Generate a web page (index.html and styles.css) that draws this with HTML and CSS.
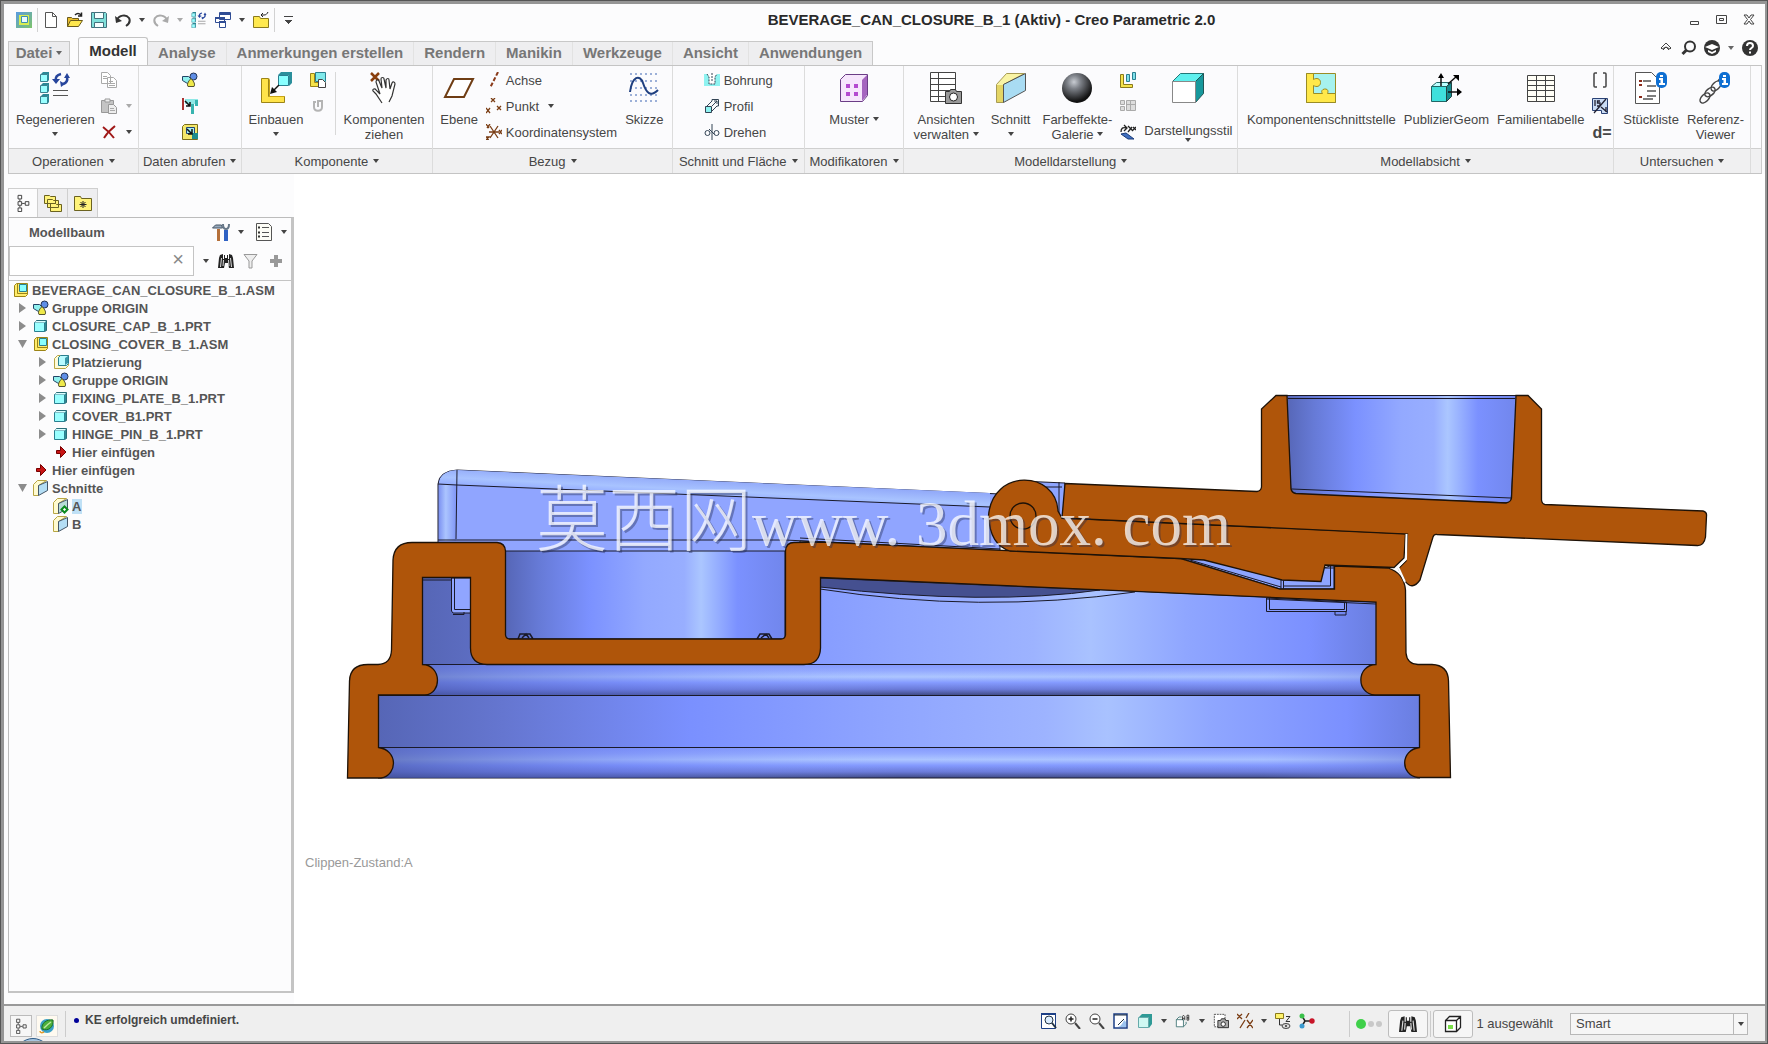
FILE: index.html
```html
<!DOCTYPE html>
<html lang="de">
<head>
<meta charset="utf-8">
<meta name="viewport" content="width=device-width, initial-scale=1">
<title>BEVERAGE_CAN_CLOSURE_B_1 (Aktiv) - Creo Parametric 2.0</title>
<link rel="stylesheet" href="styles.css">
</head>
<body>
<svg class="defs" aria-hidden="true">
  <defs>
    <linearGradient id="g-app" x2="1" y2="1"><stop offset="0" stop-color="#5b9be0"/><stop offset="1" stop-color="#7ec46a"/></linearGradient>
    <radialGradient id="g-ball" cx=".4" cy=".3" r=".65"><stop offset="0" stop-color="#c8ccd2"/><stop offset=".35" stop-color="#7c8087"/><stop offset="1" stop-color="#111"/></radialGradient>
  </defs>
  <symbol id="i-app" viewBox="0 0 16 16"><path fill="url(#g-app)" d="M0 0h16v16H0z"/><path fill="#d8ec50" d="M3 3h10v10H3z"/><path fill="#e8fbff" stroke="#3a8fb0" d="M5.500 4.500h6v6h-6z"/></symbol>
  <symbol id="i-new" viewBox="0 0 16 16"><path fill="#fff" stroke="#555" d="M2.500 .5h7l4 4v11h-11z"/><path fill="none" stroke="#555" d="M9.500 .5v4h4"/></symbol>
  <symbol id="i-open" viewBox="0 0 16 16"><path fill="#e9bd2e" stroke="#6b5a1b" d="M.5 14.500v-9h4l1 1h6v2"/><path fill="#ffe74d" stroke="#6b5a1b" d="M.5 14.500l3-6h12l-4 6z"/><path fill="none" stroke="#222" stroke-width="1.500" d="M8 3c2-2 4-2 6 0M14.500 .5v3.500h-3.500"/></symbol>
  <symbol id="i-save" viewBox="0 0 16 16"><path fill="#7fe0da" stroke="#41717c" d="M.5 .5h14l1 1v14H.5z"/><path fill="#f4ffff" stroke="#41717c" d="M3.500 .5h9v6h-9zM3.500 10.500h9v5h-9z"/></symbol>
  <symbol id="i-undo" viewBox="0 0 16 16"><path fill="none" stroke="#333" stroke-width="2" d="M2 8c2-5 9-6 12-2 2 4 0 6-3 8"/><path fill="#333" d="M0 4l1 7 6-2z"/></symbol>
  <symbol id="i-redo" viewBox="0 0 16 16"><path fill="none" stroke="#aaa" stroke-width="2" d="M14 8C12 3 5 2 2 6c-2 4 0 6 3 8"/><path fill="#aaa" d="M16 4l-1 7-6-2z"/></symbol>
  <symbol id="i-regen" viewBox="0 0 30 32"><g fill="#9ff" stroke="#3d8290"><path d="M.5 2.500h7v7h-7zM.5 13.500h7v7h-7zM.5 24.500h7v7h-7z"/></g><g fill="#2b8896"><path d="M1 2l2-2h6v8l-1.500 2V2zM1 13l2-2h6v8l-1.500 2v-8zM1 24l2-2h6v8l-1.500 2v-8z"/></g><path fill="none" stroke="#27459c" stroke-width="2.500" d="M16 9c-1-4 1-6 5-7M27 5c1 4-1 6-4 7"/><path fill="#27459c" d="M12 7l4 5 4-5zM24 6l3-5 3 5zM20 9l1 6 4-3z"/><path stroke="#555" d="M13 18.500h15M13 23.500h15"/></symbol>
  <symbol id="i-windows" viewBox="0 0 16 16"><g fill="#fff" stroke="#2f4c94"><path d="M4.500 .5h11v7h-11zM.5 5.500h9v5h-9zM4.500 9.500h6v6h-6z"/></g><path stroke="#2f4c94" stroke-width="2" d="M4 2h12M0 6h10M4 10h7"/></symbol>
  <symbol id="i-folder" viewBox="0 0 16 16"><path fill="#ffe94f" stroke="#8a7a1c" d="M.5 15.500v-11h6l1 2h8v9z"/><path fill="none" stroke="#222" d="M8 3h3c2 0 3-1 4-3M10 1L8 3l2 2"/></symbol>
  <symbol id="i-min" viewBox="0 0 12 12"><path fill="none" stroke="#444" d="M1.500 7.500h8v3h-8z"/></symbol>
  <symbol id="i-max" viewBox="0 0 12 12"><path fill="none" stroke="#444" d="M.5 1.500h10v8H.5zM3.500 4.500h4v2h-4z"/></symbol>
  <symbol id="i-close" viewBox="0 0 12 12"><path fill="none" stroke="#444" d="M1 1h3l2 3 2-3h3L7.500 5.500 11 10H8L6 7l-2 3H1l3.500-4.500z"/></symbol>
  <symbol id="i-up" viewBox="0 0 16 16"><path fill="none" stroke="#444" d="M3 8l5-5 5 5-1 1-4-2-4 2zM5 10l3-3 3 3"/></symbol>
  <symbol id="i-search" viewBox="0 0 16 16"><circle cx="9" cy="6.500" r="5" fill="none" stroke="#333" stroke-width="2"/><path stroke="#333" stroke-width="3" d="M5.500 10L1.500 14"/></symbol>
  <symbol id="i-learn" viewBox="0 0 16 16"><circle cx="8" cy="8" r="8" fill="#333"/><path fill="#fff" d="M1 7l7-3 7 3-7 3zM4 10l4 2 4-2v2l-4 2-4-2z"/></symbol>
  <symbol id="i-help" viewBox="0 0 16 16"><circle cx="8" cy="8" r="8" fill="#333"/><path fill="none" stroke="#fff" stroke-width="2" d="M5 6c0-4 6-4 6 0 0 2-3 2-3 4"/><path fill="#fff" d="M7 11.500h2v2H7z"/></symbol>
  <symbol id="i-copy" viewBox="0 0 16 16"><g fill="#fff" stroke="#aaa"><path d="M.5 .5h6l3 3v8h-9zM6.500 5.500h6l3 3v7h-9z"/><path d="M2 4.500h4M2 6.500h4M8 9.500h4M8 11.500h6M8 13.500h6"/></g></symbol>
  <symbol id="i-paste" viewBox="0 0 16 16"><path fill="#c4c4c4" stroke="#999" d="M.5 2.500h12v12H.5z"/><path fill="#eee" stroke="#999" d="M4 1h5v3H4zM7.500 6.500h5l3 3v6h-8z"/><path stroke="#aaa" d="M9 10.500h4M9 12.500h5"/></symbol>
  <symbol id="i-del" viewBox="0 0 16 16"><path fill="none" stroke="#a01818" stroke-width="2" d="M2 3c4 3 8 7 11 11M14 2C9 6 6 9 3 14"/></symbol>
  <symbol id="i-group" viewBox="0 0 16 16"><path fill="#8ff0ee" stroke="#246" d="M.5 4.500h6l3 3-4 4-5-3z"/><circle cx="11.500" cy="4.500" r="3.500" fill="#5f8ee6" stroke="#235"/><path fill="#efe94a" stroke="#553" d="M9 6.500q5 5 3 8h-6q-2-3 3-8z"/></symbol>
  <symbol id="i-imp1" viewBox="0 0 16 16"><path fill="#8fe8e6" d="M3 1h13v5H3z"/><path fill="#38b4b0" d="M9 6h3v10H9zM13 2h3v6h-3z"/><path fill="#a33" d="M0 0h2v12H0z"/><path fill="none" stroke="#111" stroke-width="1.500" d="M3 3l5 5M8 4v4H4"/></symbol>
  <symbol id="i-imp2" viewBox="0 0 16 16"><path fill="#f5e86a" stroke="#7a6d18" d="M.5 15.500v-13l2-2h13v15z"/><path fill="#a6f0f0" stroke="#247" d="M4.500 3.500h8v6h-8z"/><path fill="#1e8c8c" d="M10 9h6v6h-6z"/><path fill="none" stroke="#111" stroke-width="1.500" d="M5 5l5 5M10 5v5H6"/></symbol>
  <symbol id="i-assemble" viewBox="0 0 32 32"><path fill="#ffe34a" stroke="#9c8417" d="M1.500 6.500h7v18h16v6h-23z"/><path fill="#c9a415" d="M9 24V8l1-2v18h15l-1 1H9z"/><path fill="#8ff" stroke="#2a7f90" d="M18.500 3.500h10v10h-10z"/><path fill="#2a8f9c" d="M18 3l3-3h11v11l-3 3V3z"/><path stroke="#111" stroke-width="1.500" d="M19 13l-7 7"/><path fill="#111" d="M10 22l2-7 5 5z"/></symbol>
  <symbol id="i-create" viewBox="0 0 16 16"><path fill="#f5e34a" stroke="#9c8417" d="M.5 1.500h4v9h5v4h-9z"/><path fill="#7fe9ea" stroke="#2a7f90" d="M5.500 .5h10v9h-10z"/><path fill="#fff" stroke="#444" d="M8.500 7.500h4l3 3v5h-7z"/></symbol>
  <symbol id="i-clip" viewBox="0 0 16 16"><path fill="none" stroke="#b4b4b4" stroke-width="2" d="M4 4v5c0 5 8 5 8 0V3H8v6M3 4h3"/></symbol>
  <symbol id="i-drag" viewBox="0 0 32 32"><path fill="none" stroke="#8a3f0e" stroke-width="2.500" d="M3 1l8 8M11 1L3 9"/><path fill="#fff" stroke="#333" stroke-width="1.200" d="M14 31L8 22l-3-3c-1-2 2-3 3-1l4 4-4-12c0-2 2-3 3-1l3 7-1-9c0-2 3-2 3 0l2 9v-8c1-2 3-2 3 0l1 9 2-6c1-2 3-1 3 1l-3 12-3 6"/></symbol>
  <symbol id="i-plane" viewBox="0 0 32 32"><path fill="#fff" stroke="#6f3d14" stroke-width="2" d="M11 7h19l-9 18H2z"/></symbol>
  <symbol id="i-axis" viewBox="0 0 16 16"><path stroke="#8a3a1a" stroke-width="2" stroke-dasharray="4 2" d="M12 0L4 16"/></symbol>
  <symbol id="i-point" viewBox="0 0 16 16"><path stroke="#7a3d14" stroke-width="1.300" d="M5 0l4 4M9 0L5 4M0 10l4 5M4 10l-4 5M11 8l4 4M15 8l-4 4"/></symbol>
  <symbol id="i-csys" viewBox="0 0 16 16"><path stroke="#7a3d14" stroke-width="1.300" d="M3 8h10M4 2l8 12M12 2L4 14M0 0l3 4M4 0L1 4M13 6l3 4M16 6l-3 4M0 13h3l-3 3h3"/></symbol>
  <symbol id="i-sketch" viewBox="0 0 32 32"><path stroke="#9cb0d8" stroke-width="2" stroke-dasharray="2 3" d="M2 2h28M2 9h28M2 16h28M2 23h28M2 29h28"/><path fill="none" stroke="#1f3f7f" stroke-width="2" d="M2 20C4 4 12 2 15 11s7 15 15 7"/></symbol>
  <symbol id="i-hole" viewBox="0 0 16 16"><path fill="#8ff3f1" d="M0 2h16v12H0z"/><path fill="#fff" d="M3 2h10l-2 3v7H5V5z"/><path fill="none" stroke="#345" stroke-dasharray="2 1" d="M3 2l2 3v7h6V5l2-3M8 1v8"/></symbol>
  <symbol id="i-extrude" viewBox="0 0 16 16"><path fill="#8ff3f1" stroke="#345" d="M1.500 8.500h6v6h-6z"/><path fill="none" stroke="#345" d="M3 8l5-5V1.500h6.500V8H13l-5 5M8 8l5-5M10 3h3v3"/></symbol>
  <symbol id="i-revolve" viewBox="0 0 16 16"><path fill="none" stroke="#345" d="M8 0v16M1 9a2.500 2.500 0 105 0 2.500 2.500 0 10-5 0M10 9a2.500 2.500 0 105 0 2.500 2.500 0 10-5 0M5 5l5 5"/></symbol>
  <symbol id="i-pattern" viewBox="0 0 32 32"><path fill="#f6e6fc" stroke="#6b3d86" d="M2.500 7.500l5-5h22v21l-5 6h-22z"/><path fill="#a565bf" d="M24 8l5-5v20l-5 6z"/><path fill="#b44ad0" d="M8 12h4v4H8zM16 12h4v4h-4zM8 20h4v4H8zM16 20h4v4h-4z"/></symbol>
  <symbol id="i-views" viewBox="0 0 32 32"><path fill="#fff" stroke="#444" d="M.5 .5h25v29H.5zM.5 6.500h25M.5 12.500h25M.5 18.500h25M.5 24.500h25M8.500 .5v29"/><path fill="#999" stroke="#333" d="M15.500 19.500h4l1-2h5l1 2h5v12h-16z"/><circle cx="23.500" cy="25" r="4" fill="#fff" stroke="#222"/></symbol>
  <symbol id="i-section" viewBox="0 0 32 32"><path fill="#f9f4a5" stroke="#a79b54" d="M1.500 12.500l10-11h18L8.500 12.500v18l-7 0z"/><path fill="#e4d565" d="M2 13h6v17H2z"/><path fill="#a9dcf3" stroke="#555" d="M8.500 12.500l22-11v17l-22 12z"/></symbol>
  <symbol id="i-ball" viewBox="0 0 32 32"><circle cx="16" cy="16" r="15" fill="url(#g-ball)"/></symbol>
  <symbol id="i-expl" viewBox="0 0 16 16"><path fill="#f5e34a" stroke="#8a7a1c" d="M.5 2.500h3v10h9v3H.5z"/><path fill="#7fe0ea" stroke="#2a7f90" d="M6.500 2.500h3v7h-3zM12.500 .5h3v7h-3z"/></symbol>
  <symbol id="i-table" viewBox="0 0 16 16"><path fill="#ddd" stroke="#aaa" d="M.5 2.500h4v4h-4zM.5 8.500h4v4h-4zM6.500 2.500h9v10h-9zM6.500 6.500h9M10.500 2.500v10"/></symbol>
  <symbol id="i-persp" viewBox="0 0 16 16"><path fill="#3f6fc0" stroke="#1b3b78" d="M1 10l5-1 8 6H8z"/><path fill="none" stroke="#222" stroke-width="1.300" d="M1 8c0-4 2-5 5-4M4 1l3 3-3 3M8 8l4-5M8 2l5 5M13 3l3 3M16 3l-3 3"/></symbol>
  <symbol id="i-cube" viewBox="0 0 32 32"><path fill="#5ff0ee" stroke="#277" d="M.5 9.500l8-8h23l-8 8z"/><path fill="#17989c" stroke="#255" d="M23.500 9.500l8-8v20l-8 9z"/><path fill="#fff" stroke="#888" d="M.5 9.500h23v21H.5z"/></symbol>
  <symbol id="i-puzzle" viewBox="0 0 32 32"><path fill="#a6f2ee" stroke="#9a8c25" d="M1.500 1.500h29v29h-29z"/><path fill="#ffe84a" stroke="#9a8c25" d="M1.500 1.500h7v6c3-2 7-1 7 3s-4 5-7 3v8h9c-4-5 8-7 5 0h8v9h-29z"/></symbol>
  <symbol id="i-publish" viewBox="0 0 32 32"><path fill="#3fe0dc" stroke="#266" d="M1.500 14.500h15v15h-15z"/><path fill="#bff" stroke="#266" d="M1.500 14.500l5-4h15l-5 4z"/><path fill="#178a8c" stroke="#244" d="M16.500 14.500l5-4v14l-5 5z"/><path fill="none" stroke="#111" stroke-width="1.500" d="M11 14V3M18 12l9-8M18 20h13"/><path d="M8 6l3-5 3 5zM23 3h6v6zM27 16l5 4-5 4z"/></symbol>
  <symbol id="i-family" viewBox="0 0 32 32"><path fill="#fffef6" stroke="#444" d="M2.500 3.500h27v26h-27zM2.500 8.500h27M2.500 13.500h27M2.500 18.500h27M2.500 24.500h27M11.500 3.500v26M20.500 3.500v26"/></symbol>
  <symbol id="i-brackets" viewBox="0 0 16 16"><path fill="none" stroke="#444" stroke-width="1.500" d="M5 1H3q-1 0-1 1v12q0 1 1 1h2M11 1h2q1 0 1 1v12q0 1-1 1h-2"/></symbol>
  <symbol id="i-param" viewBox="0 0 16 16"><path fill="#c9dbf4" stroke="#2a4276" d="M.5 .5h15v15H9.500v-3h-9z"/><path stroke="#223" stroke-width="1.300" fill="none" d="M14 1L2 15M3 2v6M8 3H5.500v2H8v3H5M9 9l6 5M14 9v5"/></symbol>
  <symbol id="i-bom" viewBox="0 0 32 32"><path fill="#fff" stroke="#555" d="M.5 .5h16l8 8v23H.5z"/><path stroke="#555" stroke-width="1.500" d="M8 9h8M12 14h9M12 19h9M12 24h9M8 27h10"/><path fill="#8a2a1a" d="M4 8h3v2H4zM4 12h3v2H4zM4 24h3v2H4z"/><rect x="21" width="11" height="16" rx="5" fill="#0f6fd2"/><path fill="#fff" d="M25 3h3v2h-3zM24 6h4v5h2v2h-6v-2h1.500V8H24z"/></symbol>
  <symbol id="i-ref" viewBox="0 0 32 32"><g fill="none" stroke="#444" stroke-width="1.500"><ellipse cx="6" cy="26" rx="6" ry="3.500" transform="rotate(-45 6 26)"/><ellipse cx="11" cy="20" rx="6" ry="3.500" transform="rotate(-40 11 20)"/><ellipse cx="17" cy="14" rx="6" ry="3.500" transform="rotate(-45 17 14)"/><path d="M19 9l4-5"/></g><rect x="20" width="11" height="16" rx="5" fill="#0f6fd2"/><path fill="#fff" d="M24 3h3v2h-3zM23 6h4v5h2v2h-6v-2h1.500V8H23z"/></symbol>
  <symbol id="i-tree" viewBox="0 0 16 20"><path fill="none" stroke="#333" d="M2.500 1.500h4v4h-4zM2.500 8.500h4v4h-4zM2.500 15.500h4v4h-4zM10.500 8.500h4v4h-4zM4.500 6v2M4.500 13v2M7 10.500h3"/></symbol>
  <symbol id="i-folders" viewBox="0 0 18 18"><g fill="#fff37a" stroke="#6b6220"><path d="M.5 9.500v-8h5l1 1h5v7zM3.500 13.500v-8h5l1 1h5v7zM6.500 17.500v-8h5l1 1h5v7z"/></g></symbol>
  <symbol id="i-fav" viewBox="0 0 18 18"><path fill="#fff37a" stroke="#6b6220" d="M.5 16.500v-14h6l1 2h10v12z"/><path stroke="#222" d="M9 7v7M6.500 8l5 5M11.500 8l-5 5M5.500 10.500h7"/></symbol>
  <symbol id="i-tools" viewBox="0 0 18 18"><path fill="#9ab" stroke="#456" d="M.5 5l3-3h6l1 3H5z"/><path fill="#b5703a" d="M5 6h3v12H5z"/><path fill="#2f62c4" d="M12 7h4v11h-4z"/><path fill="none" stroke="#678" stroke-width="2" d="M11 1c0 4 1 5 3 5s3-2 3-5"/></symbol>
  <symbol id="i-list" viewBox="0 0 16 18"><path fill="#fdfdf6" stroke="#555" d="M.5 .5h12l3 3v14H.5z"/><path stroke="#555" d="M6 4.500h7M6 9.500h7M6 13.500h7"/><path stroke="#333" stroke-width="2" d="M2 4.500h2M2 9.500h2M2 13.500h2"/></symbol>
  <symbol id="i-bino" viewBox="0 0 16 16"><path fill="#222" d="M1 5l1-3 3-1v5h1V2h1v3h2V2h1v4h1V1l3 1 1 3 1 10h-5l-1-5H7l-1 5H0z"/><path stroke="#ddd" d="M3.500 5L2.500 14M12.500 5l1 9M5.500 7l-.5 6M10.500 7l.5 6"/></symbol>
  <symbol id="i-funnel" viewBox="0 0 16 16"><path fill="#eee" stroke="#999" d="M1 1.500h13L9 8v7H6V8z"/></symbol>
  <symbol id="i-plus" viewBox="0 0 16 16"><path fill="#999" d="M6 2h4v4h4v4h-4v4H6v-4H2V6h4z"/></symbol>
  <symbol id="i-asm" viewBox="0 0 16 16"><path fill="#ffec6a" stroke="#9c8417" d="M1.500 3.500l2-2h11v11l-2 2h-11z"/><path fill="#8ff" stroke="#2a7f90" d="M6.500 2.500h7v7h-7z"/><path fill="none" stroke="#9c8417" d="M4.500 2v9.500H14"/></symbol>
  <symbol id="i-prt" viewBox="0 0 16 16"><path fill="#2f8c96" stroke="#2a6d78" d="M1.500 4.500l2-2h10v10l-2 1z"/><path fill="#9ff" stroke="#2a7f90" d="M1.500 4.500h10v9h-10z"/><path fill="#dff" d="M3 3h10l-1.500 1.500h-10z"/></symbol>
  <symbol id="i-place" viewBox="0 0 16 16"><path fill="#fffbd8" stroke="#b8a644" d="M1.500 4.500l3-3h11v10l-3 3h-11z"/><path fill="#b8fbff" stroke="#2a7f90" d="M5.500 3.500l2-2h8v8l-2 2h-8z"/><path fill="#3a98a8" d="M12 4l3-2v7l-3 2z"/></symbol>
  <symbol id="i-insert" viewBox="0 0 16 16"><path fill="#c81414" stroke="#700" d="M3.500 6.500h4v-4l5.500 5.500-5.500 5.500v-4h-4z"/></symbol>
  <symbol id="i-sec" viewBox="0 0 16 16"><path fill="#fffbd0" stroke="#b8a644" d="M.5 4.500l4-4h9l-8 5v10h-5z"/><path fill="#b4def5" stroke="#456" d="M5.500 5.500l9-4v9l-9 5z"/></symbol>
  <symbol id="i-secact" viewBox="0 0 16 16"><path fill="#fffbd0" stroke="#b8a644" d="M.5 4.500l4-4h9l-8 5v10h-5z"/><path fill="#b8dcd8" stroke="#456" d="M5.500 5.500l9-4v9l-9 5z"/><path fill="#fff" stroke="#0b8a1e" stroke-width="2" d="M11.500 8.500l3 3-3 3-3-3z"/></symbol>
  <symbol id="i-globe" viewBox="0 0 16 16"><circle cx="8" cy="8" r="7" fill="#3aa0c8"/><path fill="#4caf3a" stroke="#1c6e2c" d="M3 11C2 5 8 1 14 2c1 6-4 12-11 9z"/><path fill="none" stroke="#bfe8a0" stroke-width="1.500" d="M5 10C7 8 9 6 12 4"/><path fill="none" stroke="#e09a2a" stroke-width="1.500" d="M1 13c0 2 2 2 4 1"/></symbol>
  <symbol id="i-refit" viewBox="0 0 16 16"><path fill="#fff" stroke="#1c3f86" d="M.5 .5h14v15H.5z"/><path stroke="#1c3f86" stroke-width="2" d="M0 1h15"/><circle cx="8" cy="7" r="4" fill="#def" stroke="#234"/><path stroke="#234" stroke-width="2" d="M11 10l4 5"/></symbol>
  <symbol id="i-zin" viewBox="0 0 16 16"><circle cx="6" cy="6" r="5" fill="#fff" stroke="#444"/><path stroke="#444" stroke-width="2" d="M10 10l5 6"/><path stroke="#222" stroke-width="1.500" d="M3.500 6h5M6 3.500v5"/></symbol>
  <symbol id="i-zout" viewBox="0 0 16 16"><circle cx="6" cy="6" r="5" fill="#fff" stroke="#444"/><path stroke="#444" stroke-width="2" d="M10 10l5 6"/><path stroke="#222" stroke-width="1.500" d="M3.500 6h5"/></symbol>
  <symbol id="i-repaint" viewBox="0 0 16 16"><path fill="#fff" stroke="#1c3f86" stroke-width="1.500" d="M1 1h13v14H1z"/><path fill="#9cc4f0" d="M5 14c3-1 5-4 6-7l2 2v5z"/><path stroke="#234" d="M5 12l6-6M1 2h13"/></symbol>
  <symbol id="i-shade" viewBox="0 0 16 16"><path fill="#2f9a96" d="M2 4l3-3h10v10l-3 4z"/><path fill="#cff8f2" stroke="#6aa" d="M1.500 4.500h10v10h-10z"/></symbol>
  <symbol id="i-named" viewBox="0 0 18 16"><path fill="#fff" stroke="#477" d="M1.500 6.500h8v8h-8zM1.500 6.500l3-3h3M9.500 14.500l3-3V9"/><path fill="none" stroke="#333" d="M8.500 7V3l1-1.500 1.500 1.500v4M8.500 5h2.500M13.500 1.500V7h2V4.500h-2 2v-3z"/></symbol>
  <symbol id="i-viewmgr" viewBox="0 0 18 16"><path fill="#fff" stroke="#444" stroke-dasharray="2 1" d="M1.500 .5h12v14h-12z"/><path fill="#aaa" stroke="#222" d="M5.500 7.500h3l1-2h4l1 2h3v8h-12z"/><circle cx="11.500" cy="11.500" r="2.500" fill="#fff" stroke="#222"/></symbol>
  <symbol id="i-datum" viewBox="0 0 16 16"><path stroke="#7a3d14" stroke-width="1.300" d="M0 1l5 5M5 1L0 6M8 7L3 15M12 0L9 5M10 7l6 8M16 7l-6 8"/></symbol>
  <symbol id="i-annot" viewBox="0 0 16 16"><path fill="#fff36a" stroke="#8a7a1c" d="M.5 .5h8v5h-8z"/><path fill="none" stroke="#333" d="M11 3.500h4l-4 5h4M4.500 6v6H7"/><ellipse cx="11" cy="13" rx="4" ry="2.500" fill="#ddd" stroke="#444"/><circle cx="11" cy="13" r="1" fill="#333"/></symbol>
  <symbol id="i-spin" viewBox="0 0 16 16"><path stroke="#222" stroke-width="1.500" fill="none" d="M3 3l3 5h7M6 8l-3 5"/><circle cx="3" cy="3" r="2.500" fill="#3ac04a"/><circle cx="3" cy="13" r="2.500" fill="#3a9ad0"/><circle cx="13" cy="8" r="2.700" fill="#c81428"/></symbol>
  <symbol id="i-box" viewBox="0 0 18 18"><path fill="#fff" stroke="#222" stroke-width="1.300" d="M1.500 5.500l4-4h11v11l-4 4h-11zM1.500 5.500h11v11M12.500 5.500l4-4"/><path fill="#7be04a" d="M4 10h5v4H4z"/></symbol>
</svg>

<div class="window">
  <header class="titlebar">
    <div class="quick">
      <button aria-label="Creo"><svg><use href="#i-app"/></svg></button><i class="vr"></i>
      <button aria-label="Neu"><svg><use href="#i-new"/></svg></button>
      <button aria-label="Öffnen"><svg><use href="#i-open"/></svg></button>
      <button aria-label="Speichern"><svg><use href="#i-save"/></svg></button>
      <button aria-label="Rückgängig"><svg><use href="#i-undo"/></svg></button><button class="drop" aria-label="Rückgängig-Liste"><i class="caret"></i></button>
      <button aria-label="Wiederherstellen"><svg><use href="#i-redo"/></svg></button><button class="drop" aria-label="Wiederherstellen-Liste"><i class="caret pale"></i></button>
      <button aria-label="Regenerieren"><svg><use href="#i-regen"/></svg></button>
      <button aria-label="Fenster"><svg><use href="#i-windows"/></svg></button><button class="drop" aria-label="Fensterliste"><i class="caret"></i></button>
      <button aria-label="Schließen"><svg><use href="#i-folder"/></svg></button><i class="vr"></i>
      <button aria-label="Symbolleiste anpassen"><i class="caret wide"></i></button>
    </div>
    <h1>BEVERAGE_CAN_CLOSURE_B_1 (Aktiv) - Creo Parametric 2.0</h1>
    <div class="controls">
      <button aria-label="Minimieren"><svg><use href="#i-min"/></svg></button>
      <button aria-label="Maximieren"><svg><use href="#i-max"/></svg></button>
      <button aria-label="Fenster schließen"><svg><use href="#i-close"/></svg></button>
    </div>
  </header>

  <nav class="tabs">
    <button class="file">Datei <i class="caret"></i></button>
    <button class="active">Modell</button>
    <div class="rest">
      <button>Analyse</button><button>Anmerkungen erstellen</button><button>Rendern</button><button>Manikin</button><button>Werkzeuge</button><button>Ansicht</button><button>Anwendungen</button>
    </div>
    <div class="assist">
      <button aria-label="Multifunktionsleiste minimieren"><svg><use href="#i-up"/></svg></button>
      <button aria-label="Suchen"><svg><use href="#i-search"/></svg></button>
      <button aria-label="Lernen"><svg><use href="#i-learn"/></svg></button>
      <button class="drop" aria-label="Lernmenü"><i class="caret"></i></button>
      <button aria-label="Hilfe"><svg><use href="#i-help"/></svg></button>
    </div>
  </nav>

  <div class="ribbon">
    <section class="group">
      <div class="tools tight">
        <button class="big"><svg><use href="#i-regen"/></svg><span>Regenerieren<br><i class="caret"></i></span></button>
        <div class="stack">
          <button aria-label="Kopieren"><svg><use href="#i-copy"/></svg></button>
          <button aria-label="Einfügen"><svg><use href="#i-paste"/></svg><i class="caret pale"></i></button>
          <button aria-label="Löschen"><svg><use href="#i-del"/></svg><i class="caret"></i></button>
        </div>
      </div>
      <button class="name">Operationen <i class="caret"></i></button>
    </section>
    <section class="group">
      <div class="tools center">
        <div class="stack">
          <button aria-label="Benutzerdefiniertes KE"><svg><use href="#i-group"/></svg></button>
          <button aria-label="Geometrie kopieren"><svg><use href="#i-imp1"/></svg></button>
          <button aria-label="Schrumpfverpackung"><svg><use href="#i-imp2"/></svg></button>
        </div>
      </div>
      <button class="name">Daten abrufen <i class="caret"></i></button>
    </section>
    <section class="group">
      <div class="tools tight">
        <button class="big"><svg><use href="#i-assemble"/></svg><span>Einbauen<br><i class="caret"></i></span></button>
        <div class="stack">
          <button aria-label="Erzeugen"><svg><use href="#i-create"/></svg></button>
          <button aria-label="Wiederholen"><svg><use href="#i-clip"/></svg></button>
        </div>
        <i class="divider"></i>
        <button class="big"><svg><use href="#i-drag"/></svg><span>Komponenten<br>ziehen</span></button>
      </div>
      <button class="name">Komponente <i class="caret"></i></button>
    </section>
    <section class="group">
      <div class="tools">
        <button class="big"><svg><use href="#i-plane"/></svg><span>Ebene</span></button>
        <div class="stack">
          <button><svg><use href="#i-axis"/></svg>Achse</button>
          <button><svg><use href="#i-point"/></svg>Punkt <i class="caret"></i></button>
          <button><svg><use href="#i-csys"/></svg>Koordinatensystem</button>
        </div>
        <button class="big after"><svg><use href="#i-sketch"/></svg><span>Skizze</span></button>
      </div>
      <button class="name">Bezug <i class="caret"></i></button>
    </section>
    <section class="group">
      <div class="tools center">
        <div class="stack">
          <button><svg><use href="#i-hole"/></svg>Bohrung</button>
          <button><svg><use href="#i-extrude"/></svg>Profil</button>
          <button><svg><use href="#i-revolve"/></svg>Drehen</button>
        </div>
      </div>
      <button class="name">Schnitt und Fläche <i class="caret"></i></button>
    </section>
    <section class="group">
      <div class="tools center">
        <button class="big"><svg><use href="#i-pattern"/></svg><span>Muster <i class="caret"></i></span></button>
      </div>
      <button class="name">Modifikatoren <i class="caret"></i></button>
    </section>
    <section class="group">
      <div class="tools inset spaced">
        <button class="big"><svg><use href="#i-views"/></svg><span>Ansichten<br>verwalten <i class="caret"></i></span></button>
        <button class="big"><svg><use href="#i-section"/></svg><span>Schnitt<br><i class="caret"></i></span></button>
        <button class="big"><svg><use href="#i-ball"/></svg><span>Farbeffekte-<br>Galerie <i class="caret"></i></span></button>
        <div class="stack">
          <button aria-label="Explosionsansicht"><svg><use href="#i-expl"/></svg></button>
          <button aria-label="Status umschalten"><svg><use href="#i-table"/></svg></button>
          <button aria-label="Perspektive"><svg><use href="#i-persp"/></svg></button>
        </div>
        <button class="big low"><svg><use href="#i-cube"/></svg><span>Darstellungsstil<br><i class="caret"></i></span></button>
      </div>
      <button class="name">Modelldarstellung <i class="caret"></i></button>
    </section>
    <section class="group">
      <div class="tools inset">
        <button class="big"><svg><use href="#i-puzzle"/></svg><span>Komponentenschnittstelle</span></button>
        <button class="big"><svg><use href="#i-publish"/></svg><span>PublizierGeom</span></button>
        <button class="big"><svg><use href="#i-family"/></svg><span>Familientabelle</span></button>
        <div class="stack">
          <button aria-label="Parameter"><svg><use href="#i-brackets"/></svg></button>
          <button aria-label="Maße umschalten"><svg><use href="#i-param"/></svg></button>
          <button class="rel">d=</button>
        </div>
      </div>
      <button class="name">Modellabsicht <i class="caret"></i></button>
    </section>
    <section class="group">
      <div class="tools inset">
        <button class="big"><svg><use href="#i-bom"/></svg><span>Stückliste</span></button>
        <button class="big"><svg><use href="#i-ref"/></svg><span>Referenz-<br>Viewer</span></button>
      </div>
      <button class="name">Untersuchen <i class="caret"></i></button>
    </section>
    <section class="group"><div class="tools"></div><div class="name"></div></section>
  </div>

  <main class="work">
    <aside class="side">
      <div class="sidetabs">
        <button class="on" aria-label="Modellbaum"><svg viewBox="0 0 16 20"><use href="#i-tree"/></svg></button>
        <button aria-label="Ordner-Browser"><svg><use href="#i-folders"/></svg></button>
        <button aria-label="Favoriten"><svg><use href="#i-fav"/></svg></button>
      </div>
      <div class="panel">
        <div class="panelhead">
          <h2>Modellbaum</h2>
          <button aria-label="Einstellungen"><svg><use href="#i-tools"/></svg><i class="caret"></i></button>
          <button aria-label="Anzeigen"><svg><use href="#i-list"/></svg><i class="caret"></i></button>
        </div>
        <div class="find">
          <div class="field"><input type="text" aria-label="Modellbaum durchsuchen"><button aria-label="Löschen">×</button></div>
          <button class="drop" aria-label="Suchoptionen"><i class="caret"></i></button>
          <button aria-label="Suchen"><svg><use href="#i-bino"/></svg></button>
          <button aria-label="Filter"><svg><use href="#i-funnel"/></svg></button>
          <button aria-label="Hinzufügen"><svg><use href="#i-plus"/></svg></button>
        </div>
        <ul class="tree">
          <li><div class="row root"><svg><use href="#i-asm"/></svg>BEVERAGE_CAN_CLOSURE_B_1.ASM</div>
            <ul>
              <li><div class="row"><i class="tw"></i><svg><use href="#i-group"/></svg>Gruppe ORIGIN</div></li>
              <li><div class="row"><i class="tw"></i><svg><use href="#i-prt"/></svg>CLOSURE_CAP_B_1.PRT</div></li>
              <li><div class="row"><i class="tw open"></i><svg><use href="#i-asm"/></svg>CLOSING_COVER_B_1.ASM</div>
                <ul>
                  <li><div class="row"><i class="tw"></i><svg><use href="#i-place"/></svg>Platzierung</div></li>
                  <li><div class="row"><i class="tw"></i><svg><use href="#i-group"/></svg>Gruppe ORIGIN</div></li>
                  <li><div class="row"><i class="tw"></i><svg><use href="#i-prt"/></svg>FIXING_PLATE_B_1.PRT</div></li>
                  <li><div class="row"><i class="tw"></i><svg><use href="#i-prt"/></svg>COVER_B1.PRT</div></li>
                  <li><div class="row"><i class="tw"></i><svg><use href="#i-prt"/></svg>HINGE_PIN_B_1.PRT</div></li>
                  <li><div class="row"><i class="tw none"></i><svg><use href="#i-insert"/></svg>Hier einfügen</div></li>
                </ul>
              </li>
              <li><div class="row"><i class="tw none"></i><svg><use href="#i-insert"/></svg>Hier einfügen</div></li>
              <li><div class="row"><i class="tw open"></i><svg><use href="#i-sec"/></svg>Schnitte</div>
                <ul>
                  <li><div class="row"><i class="tw none"></i><svg><use href="#i-secact"/></svg><span class="picked">A</span></div></li>
                  <li><div class="row"><i class="tw none"></i><svg><use href="#i-sec"/></svg>B</div></li>
                </ul>
              </li>
            </ul>
          </li>
        </ul>
      </div>
    </aside>

    <div class="view">
      <svg class="model" viewBox="294 174 1471 830" role="img" aria-label="Schnittansicht A des Dosenverschlusses">
        <defs>
          <linearGradient id="m-wide"><stop offset="0" stop-color="#5666b6"/><stop offset=".12" stop-color="#6576d0"/><stop offset=".3" stop-color="#7a90ff"/><stop offset=".5" stop-color="#90a6ff"/><stop offset=".64" stop-color="#9db3ff"/><stop offset=".7" stop-color="#a9c2ff"/><stop offset=".8" stop-color="#8fa6ff"/><stop offset=".93" stop-color="#7b90ff"/><stop offset="1" stop-color="#6a7ee0"/></linearGradient>
          <linearGradient id="m-cup"><stop offset="0" stop-color="#5666b6"/><stop offset=".12" stop-color="#667ad6"/><stop offset=".3" stop-color="#7b91ff"/><stop offset=".5" stop-color="#93a9ff"/><stop offset=".64" stop-color="#98aeff"/><stop offset=".7" stop-color="#abc6ff"/><stop offset=".83" stop-color="#7b91ff"/><stop offset="1" stop-color="#7186ec"/></linearGradient>
          <linearGradient id="m-band" x2="0" y2="1"><stop offset="0" stop-color="#8499fc"/><stop offset=".2" stop-color="#94aaff"/><stop offset=".4" stop-color="#adc6ff"/><stop offset=".58" stop-color="#859bff"/><stop offset=".8" stop-color="#6a7ad8"/><stop offset="1" stop-color="#3c4780"/></linearGradient>
          <linearGradient id="m-fade"><stop offset="0" stop-color="#4656a8" stop-opacity=".7"/><stop offset=".25" stop-color="#6478f0" stop-opacity=".35"/><stop offset=".5" stop-color="#8ea8ff" stop-opacity="0"/><stop offset=".85" stop-color="#7b90ff" stop-opacity=".1"/><stop offset="1" stop-color="#5a6cd0" stop-opacity=".5"/></linearGradient>
          <linearGradient id="m-top" gradientUnits="userSpaceOnUse" x1="700" y1="478" x2="699" y2="498"><stop offset="0" stop-color="#8fa6f8"/><stop offset=".6" stop-color="#a8c3ff"/><stop offset="1" stop-color="#92aaff"/></linearGradient>
          <linearGradient id="m-side"><stop offset="0" stop-color="#7e94f2"/><stop offset=".4" stop-color="#abc4ff"/><stop offset="1" stop-color="#8197f6"/></linearGradient>
        </defs>
        <g class="edge">
          <path fill="#90a5ff" d="M438 541V484Q439 471 457 470L1000 494V552L800 541V552H438z"/>
          <path class="flat" fill="url(#m-top)" d="M439 484Q440 471 457 470L990 493V507z"/>
          <path class="flat" fill="url(#m-side)" d="M439 485H456V541H439z"/>
          <path fill="none" d="M438 484L457 485 990 507M457 470L456 539M438 540H785L1010 551M800 538L1000 549"/>
          <path fill="url(#m-wide)" d="M422 577H820L1377 602V665H422z"/>
          <path fill="url(#m-cup)" d="M505 551H785V639H505z"/>
          <path class="bold" d="M518 639l2-5h10l3 5M522 638l4-4 3 4M757 639l3-5h9l3 5M761 638l5-4 3 4"/>
          <path fill="none" d="M422 580H470M820 589Q980 614 1135 592"/>
          <path fill="#455090" d="M820 578L1100 590Q990 606 820 587z"/>
          <path fill="#90a5ff" d="M451.500 578H471V613H453L451.500 611z"/>
          <path fill="none" d="M454.500 578V609.500H471M453 614.500H464V612"/>
          <path fill="#859afe" d="M1266.500 598L1346.500 602V611.500H1266.500z"/>
          <path fill="none" d="M1269.500 598V609.500H1344.500V602M1335 612v3h11v-4"/>
          <path fill="none" d="M1266 599L1376 604"/>
          <path fill="url(#m-band)" d="M422 664.500H1377V695.500H422z"/>
          <path fill="url(#m-wide)" d="M378 695.500H1420V747.500H378z"/>
          <path fill="url(#m-band)" d="M378 747.500H1420V778H378z"/>
          <path class="flat" fill="url(#m-fade)" d="M422 665H1377V695H422zM378 748H1420V778H378z"/>
          <path fill="#8ea5ff" d="M1020 481L1065 483V520L1040 530z"/>
          <path fill="none" d="M1040 487H1062M1059 482V516"/>
          <path fill="#8ea5ff" d="M1180 558H1200L1285 580 1330 566H1334V589H1280z"/>
          <path fill="url(#m-cup)" d="M1286 395.500H1517L1511 503 1291 494z"/>
          <path fill="none" d="M1288 398.500H1515M1292 489L1511 498"/>
        </g>
        <g class="cut">
          <path d="M347.500 778L349.500 681Q350 664.500 368 664.500H378Q391 664 391.500 650L393 560Q394 542.500 412 542.500H497Q505 543 505.500 551V635Q506 639 510 639H781Q785 639 785.500 635V551Q786 542.500 794 542.500L822 542 1180 558.500 1280 589H1334.500V566L1388 568Q1404 573 1405.500 590L1406 653Q1407 664 1418 664.500H1432Q1448 665 1448.500 681L1450.500 777.500H1418C1400 775 1400 750 1419.500 747.500V695H1375C1356 694 1356 665 1376 664.500V602L820.500 577.500V648Q820 664.500 804 664.500H487Q470.500 664 470.500 648V577.500H422.500V664.500C442 665 442 694 425 695H378.500V747.500C398 750 398 775 381 778z"/>
          <path d="M1010 551L1180 558.500 1204 560 1282 580 1321 581.500 1325 565 1394 567.500 1404 558 1405.500 533.500 1062 518 1058 511C1056 470 992 468 988.500 516Q990 545 1010 551z"/>
          <circle cx="1023" cy="516" r="13"/>
          <path d="M1065 483.500L1257 491.500Q1261 491 1261.500 487V409L1276 395.500H1287L1291 489Q1292 493 1296 493.500L1506 503Q1511 502 1511.500 498L1516 395.500H1528L1541.500 409V500Q1542 504 1545 504.500L1703 511Q1707 512 1706.500 516L1705.500 537Q1704 546 1697 545.500L1437 534.500Q1434 534 1433 537L1420 580Q1412 591 1405 581L1398.500 568.500 1406 561 1407.500 534 1062 518z"/>
        </g>
        <path fill="none" stroke="#fff" stroke-width="2" d="M1406.500 534L1406 559 1398 567 1405 582"/>
        <path class="thin" d="M1190 560L1281 587M1281 580V589M1283.500 580V589M1284 586H1330.500V566M1325 568H1334"/>
        <g class="watermark">
          <text class="ws" x="538" y="547">莫西网<tspan>www. 3dmox. com</tspan></text>
          <text x="536" y="545">莫西网<tspan>www. 3dmox. com</tspan></text>
        </g>
        <text class="clip" x="305" y="867">Clippen-Zustand:A</text>
      </svg>
    </div>
  </main>

  <footer class="status">
    <button class="toggle" aria-label="Modellbaum ein/aus"><svg viewBox="0 0 16 20"><use href="#i-tree"/></svg></button>
    <button class="toggle" aria-label="Browser ein/aus"><svg><use href="#i-globe"/></svg></button>
    <i class="bar"></i>
    <p><i class="bullet"></i>KE erfolgreich umdefiniert.</p>
    <div class="viewtools">
      <button aria-label="Neu einpassen"><svg><use href="#i-refit"/></svg></button>
      <button aria-label="Vergrößern"><svg><use href="#i-zin"/></svg></button>
      <button aria-label="Verkleinern"><svg><use href="#i-zout"/></svg></button>
      <button aria-label="Bildaufbau"><svg><use href="#i-repaint"/></svg></button>
      <button aria-label="Darstellungsstil"><svg><use href="#i-shade"/></svg></button><button class="drop" aria-label="Stilliste"><i class="caret"></i></button>
      <button aria-label="Gespeicherte Ansichten"><svg><use href="#i-named"/></svg></button><button class="drop" aria-label="Ansichtenliste"><i class="caret"></i></button>
      <button aria-label="Ansichtsmanager"><svg><use href="#i-viewmgr"/></svg></button>
      <button aria-label="Bezugsanzeige"><svg><use href="#i-datum"/></svg></button><button class="drop" aria-label="Bezugsliste"><i class="caret"></i></button>
      <button aria-label="Anmerkungsanzeige"><svg><use href="#i-annot"/></svg></button>
      <button aria-label="Drehzentrum"><svg><use href="#i-spin"/></svg></button>
    </div>
    <i class="bar"></i>
    <div class="lights"><i class="go"></i><i></i><i></i></div>
    <button class="push" aria-label="Suchen"><svg><use href="#i-bino"/></svg></button>
    <i class="bar"></i>
    <button class="push" aria-label="Auswahlpuffer"><svg><use href="#i-box"/></svg></button>
    <output>1 ausgewählt</output>
    <div class="filter"><select aria-label="Auswahlfilter"><option>Smart</option></select><i class="caret"></i></div>
    <i class="orb"></i>
  </footer>
</div>
</body>
</html>
```
FILE: styles.css
```css
* { box-sizing: border-box; }
html, body { margin: 0; height: 100%; }
body { font: 13px/15px "Liberation Sans", Arial, sans-serif; color: #464646; background: #555; }
button { font: inherit; color: inherit; background: none; border: 0; padding: 0; margin: 0; display: flex; align-items: center; justify-content: center; }
svg { display: block; flex: none; width: 16px; height: 16px; }
i { flex: none; }
ul { list-style: none; margin: 0; padding: 0; }
h1, h2, p { margin: 0; }
.defs { position: absolute; width: 0; height: 0; }

.caret { display: inline-block; border: 3px solid transparent; border-top: 4px solid #444; border-bottom: 0; vertical-align: 3px; }
.caret.pale { border-top-color: #aaa; }
.caret.wide { width: 9px; height: 8px; border: 0; border-top: 1px solid #444; background: linear-gradient(#444, #444) center 3px / 7px 1px no-repeat, linear-gradient(#444, #444) center 4px / 5px 1px no-repeat, linear-gradient(#444, #444) center 5px / 3px 1px no-repeat, linear-gradient(#444, #444) center 6px / 1px 1px no-repeat; }

.window { min-height: 100vh; display: flex; flex-direction: column; border: 3px solid #959595; border-left-width: 4px; border-top-width: 4px; background: #fcfcfd; outline: 1px solid #555; outline-offset: -1px; overflow: hidden; }

.titlebar { display: flex; align-items: center; height: 33px; padding: 0 10px 2px 0; }
.quick { display: flex; align-items: center; padding-left: 8px; }
.quick button { width: 24px; height: 24px; }
.quick .drop { width: 14px; }
.vr { width: 1px; height: 24px; margin: 0 1px; background: #d2d2d2; }
.titlebar h1 { flex: 1; text-align: center; font-size: 15px; line-height: 20px; color: #2a2a2a; padding-right: 6px; }
.controls { display: flex; gap: 15px; }
.controls svg { width: 12px; height: 12px; }

.tabs { display: flex; align-items: flex-end; height: 28px; padding: 0 4px; font-size: 15px; font-weight: bold; color: #777; }
.tabs button { padding-bottom: 2px; }
.tabs .file { height: 24px; width: 62px; gap: 4px; background: #ececee; border: 1px solid #c8c8c8; border-bottom: 0; margin-right: 8px; }
.tabs .caret { border-top-color: #666; }
.tabs .active { height: 28px; width: 70px; color: #333; border: 1px solid #c4c4c4; border-bottom: 0; border-radius: 3px 3px 0 0; background: #fcfcfd; }
.rest { display: flex; height: 24px; background: #eeeef0; border: 1px solid #c8c8c8; border-width: 1px 1px 0 0; }
.rest button { padding: 0 10px 2px; border-right: 1px solid #e2e2e2; }
.rest button:last-child { border: 0; }
.assist { display: flex; align-items: center; gap: 7px; margin-left: auto; height: 32px; padding-right: 3px; }
.assist .drop { width: 8px; }

.ribbon { display: grid; grid-template-columns: 130fr 103fr 192fr 240fr 132fr 100fr 334fr 377fr 137fr 10fr; margin: 0 3px 0 4px; border: 1px solid #c4c4c4; border-right-color: #ccc; background: #fbfbfd; }
.group { display: flex; flex-direction: column; border-right: 1px solid #dcdcdc; }
.group:last-child { border-right: 0; }
.tools { display: flex; height: 82px; padding: 1px 0 0 3px; align-items: flex-start; white-space: nowrap; }
.tools.inset { padding-left: 5px; }
.tools.center { justify-content: center; padding-left: 0; }
.tools.spaced { gap: 4px; }
.big { flex-direction: column; padding: 5px 4px 0; }
.big svg { width: 32px; height: 32px; margin-bottom: 8px; }
.big.low svg { margin-bottom: 22px; }
.big.low span { line-height: 10px; }
.big.after { margin-left: 4px; }
.big span { text-align: center; min-height: 15px; }
.stack { padding-left: 4px; }
.stack button { height: 26px; gap: 4px; justify-content: flex-start; }
.stack svg + .caret { margin-left: 5px; }
.stack .rel { font-size: 16px; font-weight: bold; }
.tools.spaced .stack, .tools.center .stack { padding-left: 0; }
.tools.tight .stack { padding-left: 2px; }
.divider { width: 1px; height: 63px; margin: 5px 4px 0 9px; background: #d8d8d8; }
.name { height: 25px; border-top: 1px solid #cfcfcf; background: #f0f0f1; gap: 5px; white-space: nowrap; }

.work { flex: 1; display: grid; grid-template-columns: 290px 1fr; }
.side { display: flex; flex-direction: column; padding: 14px 0 11px 4px; }
.sidetabs { display: flex; }
.sidetabs button { width: 30px; height: 29px; background: #eeeef0; border: 1px solid #cfcfcf; border-bottom: 0; border-left: 0; }
.sidetabs .on { background: #fcfcfd; border-left: 1px solid #cfcfcf; }
.sidetabs svg { width: 18px; height: 18px; }
.panel { flex: 1; width: 286px; border: 1px solid #bcbcbc; border-right: 3px solid #c4c4c4; border-bottom: 2px solid #c4c4c4; }
.panelhead { display: flex; align-items: center; height: 28px; padding: 0 4px 0 20px; gap: 11px; }
.panelhead h2 { flex: 1; font-size: 13px; line-height: 15px; color: #555; }
.panelhead button { gap: 8px; }
.panelhead svg { width: 18px; height: 18px; }
.find { display: flex; align-items: center; gap: 9px; height: 35px; border-bottom: 1px solid #c4c4c4; padding-bottom: 4px; }
.field { display: flex; align-items: center; width: 185px; height: 30px; border: 1px solid #c4c4c4; background: #fff; padding-right: 8px; }
.field input { flex: 1; min-width: 0; height: 26px; border: 0; background: none; font: inherit; }
.field button { width: 14px; font-size: 20px; color: #888; height: 22px; padding-bottom: 4px; }
.find .drop { width: 6px; }
.tree { font-weight: bold; color: #555; }
.tree ul ul { padding-left: 20px; }
.row { display: flex; align-items: center; height: 18px; padding-left: 7px; white-space: nowrap; }
.row svg { margin-right: 3px; }
.row.root { padding-left: 4px; }
.tw { width: 7px; height: 10px; margin: 0 7px 0 3px; background: #8c8c8c; clip-path: polygon(0 0, 100% 50%, 0 100%); }
.tw.open { width: 9px; height: 8px; margin: 0 6px 0 2px; clip-path: polygon(0 0, 100% 0, 50% 100%); }
.tw.none { background: none; }
.picked { background: #bfe0f5; padding-right: 1px; }

.view { background: #fff; min-width: 0; display: flex; }
.model { width: 100%; height: auto; flex: 1; }
.edge path { stroke: #1a1a2a; stroke-width: 1; }
.edge .flat { stroke: none; }
.edge .bold { fill: none; stroke-width: 1.500; }
.cut path, .cut circle { fill: #af550a; stroke: #1d1208; stroke-width: 1.3; }
.thin { fill: none; stroke: #1a1a2a; }
.watermark { font: 300 72px "Noto Sans CJK SC", sans-serif; fill: #fff; fill-opacity: .75; }
.watermark tspan { font: 63px "Liberation Serif", serif; }
.watermark .ws { fill: #222a50; fill-opacity: .4; }
.clip { font: 13px "Liberation Sans", Arial, sans-serif; fill: #999; }

.status { position: relative; display: flex; align-items: center; height: 37px; border-top: 2px solid #999; background: #efefef; padding: 0 17px 0 6px; }
.toggle { width: 22px; height: 22px; margin-right: 4px; align-self: flex-end; margin-bottom: 4px; border: 1px solid #bbb; background: #f7f7f7; }
.toggle + .toggle { background: #fffaf0; border-color: #ddd; }
.bar { width: 1px; height: 26px; background: #ccc; margin: 0 3px; }
.status p { flex: 1; display: flex; align-items: center; gap: 6px; padding: 0 0 7px 5px; font-size: 12px; line-height: 15px; font-weight: bold; }
.bullet { width: 5px; height: 5px; border-radius: 50%; background: #009; }
.viewtools { display: flex; align-items: center; padding: 0 27px 6px 0; }
.viewtools button { width: 24px; height: 24px; }
.viewtools .drop { width: 14px; }
.lights { display: flex; align-items: center; gap: 2px; padding: 0 6px 0 3px; }
.lights i { width: 6px; height: 6px; border-radius: 50%; background: #c8c8c8; }
.lights .go { width: 10px; height: 10px; background: #3fd04a; }
.push { width: 40px; height: 28px; border: 1px solid #bdbdbd; border-radius: 3px; background: #f6f6f6; }
.push svg { width: 18px; height: 18px; }
.push + .bar { margin: 0 2px; }
.status output { padding: 0 17px 0 3px; white-space: nowrap; }
.filter { position: relative; width: 178px; }
.filter select { appearance: none; width: 100%; height: 22px; border: 1px solid #b8b8b8; background: linear-gradient(#b8b8b8, #b8b8b8) right 13px top / 1px 100% no-repeat #f6f6f6; font: inherit; color: inherit; padding: 0 5px; border-radius: 0; }
.filter .caret { position: absolute; right: 4px; top: 9px; pointer-events: none; }
.orb { position: absolute; left: 11px; top: 32px; width: 36px; height: 36px; border: 1px solid #2d5c88; border-radius: 50%; background: #a9c6e0; }
```
